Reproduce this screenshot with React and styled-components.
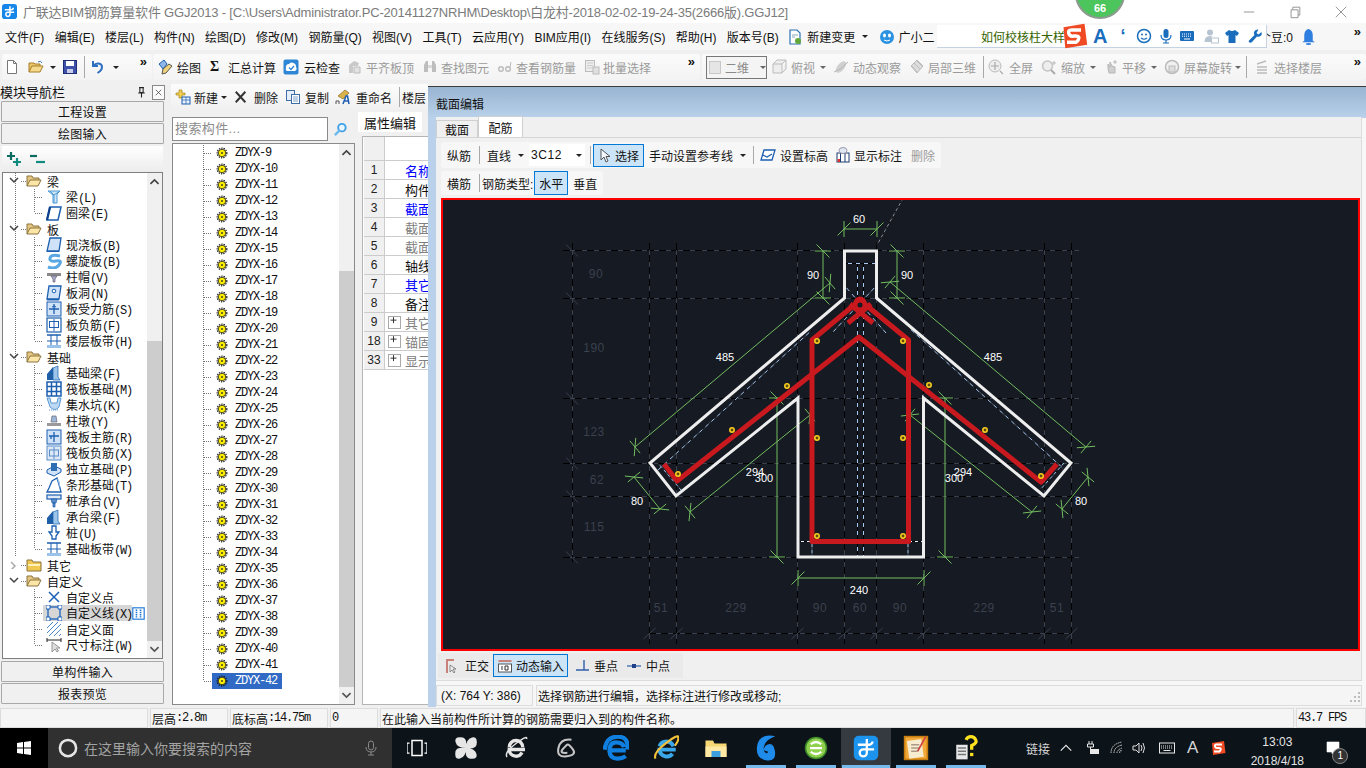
import React from 'react'
import styled, { createGlobalStyle } from 'styled-components'

const Global = createGlobalStyle`
  html, body { margin: 0; padding: 0; width: 1366px; height: 768px; overflow: hidden; background: #f0f0f0; }
  body { font-family: "Liberation Sans", "Noto Sans CJK SC", sans-serif; font-size: 12px; color: #111; }
  * { box-sizing: border-box; }
  svg { display: block; flex: none; }
`

const Page = styled.div`
  position: relative;
  width: 1366px;
  height: 768px;
  display: flex;
  flex-direction: column;
  overflow: hidden;
`

/* ---------- title bar ---------- */
const TitleBar = styled.div`
  height: 23px;
  background: #fff;
  display: flex;
  align-items: center;
  padding-left: 2px;
  color: #7b7b7b;
  font-size: 13px;
  white-space: nowrap;
`
const TitleText = styled.span`
  margin-left: 6px;
  letter-spacing: -0.2px;
`
const WinButtons = styled.div`
  margin-left: auto;
  display: flex;
  align-items: center;
  gap: 32px;
  padding-right: 18px;
`
const Badge = styled.div`
  position: absolute;
  left: 1075px;
  top: -31px;
  width: 50px;
  height: 50px;
  border-radius: 50%;
  background: #4cc65c;
  border: 2px solid #8d9a8f;
  color: #fff;
  font-size: 11px;
  font-weight: bold;
  display: flex;
  align-items: flex-end;
  justify-content: center;
  padding-bottom: 3px;
`

/* ---------- menu bar ---------- */
const MenuBar = styled.div`
  height: 27px;
  background: #f7f7f7;
  display: flex;
  align-items: center;
`
const MenuItems = styled.div`
  width: 937px;
  flex: none;
  display: flex;
  align-items: center;
  gap: 10.35px;
  padding-left: 5px;
  white-space: nowrap;
`
const MenuItem = styled.span`
  display: inline-flex;
  align-items: center;
  gap: ${p => p.$gap ?? 3}px;
  margin-left: ${p => p.$ml || 0}px;
`
const NewsPanel = styled.div`
  position: relative;
  z-index: 1;
  flex: none;
  width: 330px;
  height: 23px;
  background: #fff;
  border: 1px solid #c4d2e2;
  border-width: 0 1px 1px 0;
  display: flex;
  align-items: center;
  padding-left: 44px;
  color: #356300;
  font-size: 12px;
  white-space: nowrap;
`
const SogouGlyph = styled.span`
  margin-left: ${p => p.$ml || 0}px;
  color: #1a6dbd;
  font-size: ${p => p.$fs || 18}px;
  font-weight: bold;
`
const Beans = styled.span`
  margin-left: -8px;
  white-space: nowrap;
`
const More = styled.span`
  flex: none;
  font-size: 13px;
  font-weight: bold;
  line-height: 10px;
  color: #111;
  margin-left: auto;
  margin-right: 5px;
  transform: translateY(-5px);
`

/* ---------- tool bar ---------- */
const ToolRow = styled.div`
  height: 34px;
  background: #f0f0f0;
  display: flex;
  padding-top: 4px;
  gap: 2px;
`
const ToolSeg = styled.div`
  height: 26px;
  width: ${p => p.$w}px;
  margin-left: ${p => p.$ml || 0}px;
  background: linear-gradient(#fbfbfb, #f3f3f3);
  border-radius: 3px;
  display: flex;
  align-items: center;
  white-space: nowrap;
`
const Tool = styled.span`
  display: inline-flex;
  align-items: center;
  flex: none;
  gap: ${p => p.$gap ?? 3}px;
  margin-left: ${p => p.$ml || 0}px;
  color: ${p => (p.$off ? '#9b9b9b' : '#151515')};
  white-space: nowrap;
`
const Sep = styled.span`
  flex: none;
  width: 1px;
  height: ${p => p.$h || 22}px;
  margin-left: ${p => p.$ml || 0}px;
  background: #a8a8a8;
`
const Caret = styled.span`
  flex: none;
  width: 0;
  height: 0;
  margin-left: ${p => p.$ml || 0}px;
  border-left: 3px solid transparent;
  border-right: 3px solid transparent;
  border-top: 3px solid ${p => p.$c || '#222'};
`
const ViewCombo = styled.div`
  width: 61px;
  height: 23px;
  margin-left: 4px;
  border: 1px solid #777;
  background: #f4f4f4;
  display: flex;
  align-items: center;
  padding-left: 2px;
  gap: 4px;
  color: #8a8a8a;
  flex: none;
`
const Swatch = styled.span`
  width: 13px;
  height: 13px;
  background: #e5e5e5;
  border: 1px solid #c8c8c8;
`
const SigmaMark = styled.span`
  font-family: "Liberation Serif", serif;
  font-size: 14px;
  font-weight: bold;
  width: 10px;
`

/* ---------- main ---------- */
const Main = styled.div`
  height: 623px;
  display: flex;
`
const Nav = styled.div`
  width: 165px;
  display: flex;
  flex-direction: column;
`
const NavHead = styled.div`
  height: 17px;
  font-size: 13px;
  display: flex;
  align-items: center;
  white-space: nowrap;
  line-height: 16px;
`
const NavClose = styled.span`
  width: 16px;
  height: 15px;
  border: 1px solid #888;
  background: #fafafa;
  margin-left: 4px;
  display: flex;
  align-items: center;
  justify-content: center;
`
const NavButton = styled.div`
  height: 21px;
  margin: 0 1px 1px;
  border: 1px solid #a9a9a9;
  border-radius: 1px;
  background: #f0f0f0;
  display: flex;
  align-items: center;
  justify-content: center;
  letter-spacing: 0.2px;
`
const NavTools = styled.div`
  height: 26px;
  margin: 1px 2px 0;
  background: linear-gradient(#fff, #ececec);
  display: flex;
  align-items: center;
  padding-left: 4px;
  gap: 6px;
`
const TreeBox = styled.div`
  height: 487px;
  margin: 0 2px 2px;
  border: 1px solid #7f7f7f;
  background: #fff;
  display: flex;
  overflow: hidden;
`
const TreeRows = styled.div`
  width: 143px;
  overflow: hidden;
`
const dotsV = 'repeating-linear-gradient(#777 0 1px, transparent 1px 2px)'
const TreeRow = styled.div`
  height: 16px;
  display: flex;
  align-items: center;
  white-space: nowrap;
  background-image: ${p => (p.$trunk ? dotsV : 'none')}, ${p => (p.$branch ? dotsV : 'none')};
  background-size: 1px 100%, 1px ${p => (p.$last ? '50%' : '100%')};
  background-position: 12px 0, 31px 0;
  background-repeat: no-repeat;
  padding-left: ${p => p.$left}px;
`
const Dots = styled.span`
  flex: none;
  width: ${p => p.$w}px;
  height: 1px;
  margin-left: ${p => p.$ml || 0}px;
  background: repeating-linear-gradient(to right, #777 0 1px, transparent 1px 2px);
`
const Chevron = styled.span`
  flex: none;
  width: 10px;
  height: 8px;
  display: flex;
  justify-content: center;
`
const GroupName = styled.span`
  margin-left: 5px;
`
const LeafName = styled.span`
  display: inline-flex;
  align-items: center;
  gap: 4px;
  height: 16px;
  padding-left: 3px;
  width: ${p => (p.$on ? '89px' : 'auto')};
  background: ${p => (p.$on ? '#d6d6d6' : 'transparent')};
`
const Mono = styled.span`
  font-family: "Liberation Mono", monospace;
  font-size: 12px;
  letter-spacing: -1.2px;
`
const Scroll = styled.div`
  flex: none;
  width: ${p => p.$w || 15}px;
  margin-left: auto;
  display: flex;
  flex-direction: column;
  background: #f0f0f0;
`
const ScrollEnd = styled.div`
  height: ${p => p.$h || 17}px;
  display: flex;
  align-items: center;
  justify-content: center;
  flex: none;
`
const ScrollGap = styled.div`
  height: ${p => p.$h}px;
  flex: none;
`
const ScrollThumb = styled.div`
  flex: 1;
  background: #cdcdcd;
`

/* ---------- component list and properties ---------- */
const Center = styled.div`
  width: 263px;
  margin-left: 0;
  display: flex;
  flex-direction: column;
`
const CenterTools = styled.div`
  height: 26px;
  margin-left: 6px;
  background: linear-gradient(#fcfcfc, #f0f0f0);
  display: flex;
  align-items: center;
  white-space: nowrap;
  overflow: hidden;
`
const CenterBody = styled.div`
  flex: 1;
  display: flex;
`
const ListCol = styled.div`
  width: 183px;
  margin-left: 7px;
  padding-top: 7px;
  display: flex;
  flex-direction: column;
`
const SearchRow = styled.div`
  display: flex;
  align-items: center;
  height: 24px;
`
const SearchBox = styled.div`
  width: 156px;
  height: 24px;
  border: 1px solid #8a8a8a;
  background: #fff;
  color: #8c8c8c;
  font-size: 13px;
  padding-left: 2px;
  line-height: 22px;
  letter-spacing: 0.4px;
`
const SearchGlass = styled.span`
  margin-left: 5px;
`
const ListBox = styled.div`
  flex: 1;
  margin: 2px 0 2px;
  border: 1px solid #8a8a8a;
  background: #fff;
  display: flex;
  overflow: hidden;
`
const ListRows = styled.div`
  flex: 1;
  padding-top: 1px;
`
const ListRow = styled.div`
  height: 16px;
  display: flex;
  align-items: center;
  padding-left: 31px;
  background-image: ${dotsV};
  background-size: 1px ${p => (p.$last ? '50%' : '100%')};
  background-position: 30px 0;
  background-repeat: no-repeat;
`
const ListEntry = styled.span`
  display: inline-flex;
  align-items: center;
  gap: 7px;
  height: 16px;
  padding: 0 5px 0 4px;
  background: ${p => (p.$on ? '#316ac5' : 'transparent')};
  color: ${p => (p.$on ? '#fff' : '#111')};
`
const Props = styled.div`
  flex: 1;
  min-width: 0;
  margin-left: 3px;
  padding-top: 2px;
  display: flex;
  flex-direction: column;
  overflow: hidden;
`
const PropTab = styled.div`
  width: 64px;
  height: 20px;
  background: #fff;
  font-size: 13px;
  display: flex;
  align-items: center;
  justify-content: center;
  white-space: nowrap;
`
const PropTable = styled.div`
  flex: 1;
  margin: 4px 0 2px 4px;
  width: 110px;
  border: 1px solid #b4b4b4;
  background: #fff;
  padding-left: 1px;
`
const PropHead = styled.div`
  height: 24px;
  display: flex;
  border-bottom: 1px solid #ccc;
`
const PropRow = styled.div`
  height: 19px;
  display: flex;
  border-bottom: 1px solid #ccc;
  font-size: 13px;
  white-space: nowrap;
  color: ${p => p.$c};
`
const PropIndex = styled.div`
  width: 21px;
  flex: none;
  background: #f0f0f0;
  border-right: 1px solid #ccc;
  color: #222;
  font-size: 12px;
  display: flex;
  align-items: center;
  justify-content: center;
`
const PropName = styled.div`
  padding-left: ${p => (p.$plus ? 3 : 20)}px;
  display: flex;
  align-items: center;
  gap: 4px;
`
const PlusBox = styled.span`
  width: 13px;
  height: 13px;
  border: 1px solid #aaa;
  display: flex;
  align-items: center;
  justify-content: center;
`

/* ---------- section dialog ---------- */
const Dialog = styled.div`
  flex: 1;
  margin-top: 2px;
  border-top: 1px solid #3c3c3c;
  background: linear-gradient(#99b4d1, #b9d1ea) top / 100% 31px no-repeat,
    linear-gradient(to right, #b9d1ea 8px, #f7f7f7 8px);
  display: flex;
  flex-direction: column;
  padding: 0 4px 1px 8px;
`
const DialogTitle = styled.div`
  height: 30px;
  padding-top: 10px;
  font-size: 12px;
  line-height: 16px;
  color: #111;
`
const DialogBody = styled.div`
  flex: 1;
  background: #f0f0f0;
  border-right: 1px solid #dcdcdc;
  border-bottom: 1px solid #dcdcdc;
  display: flex;
  flex-direction: column;
`
const Tabs = styled.div`
  height: 21px;
  display: flex;
  align-items: flex-end;
  border-bottom: 1px solid #d5d5d5;
`
const Tab = styled.div`
  width: ${p => p.$w}px;
  height: ${p => (p.$on ? 21 : 17)}px;
  background: ${p => (p.$on ? '#fff' : '#f0f0f0')};
  border: 1px solid #d0d0d0;
  border-bottom: 0;
  display: flex;
  align-items: center;
  justify-content: center;
`
const RebarBar = styled.div`
  width: ${p => p.$w}px;
  height: ${p => p.$h}px;
  margin: ${p => p.$top}px 0 0 5px;
  background: #f7f7f7;
  border-radius: 3px;
  display: flex;
  align-items: center;
  white-space: nowrap;
`
const RebarCombo = styled.div`
  width: 56px;
  height: 22px;
  margin-left: 5px;
  background: #fff;
  display: flex;
  align-items: center;
  padding-left: 2px;
  font-size: 12px;
  letter-spacing: 0.6px;
  flex: none;
`
const Toggle = styled.span`
  display: inline-flex;
  align-items: center;
  justify-content: ${p => (p.$center ? 'center' : 'flex-start')};
  gap: ${p => p.$gap ?? 3}px;
  flex: none;
  width: ${p => p.$w}px;
  height: ${p => p.$h || 23}px;
  margin-left: ${p => p.$ml || 0}px;
  padding-left: ${p => (p.$center ? 0 : 3)}px;
  background: #cce4f7;
  border: 1px solid #0078d7;
`
const Canvas = styled.div`
  height: 453px;
  margin: 3px 0 0 5px;
  width: 919px;
  border: 2px solid #f00;
  background: #151a23;
  overflow: hidden;
`
const BottomBar = styled.div`
  height: 25px;
  width: 245px;
  margin: 2px 0 0 2px;
  background: #eaeaea;
  display: flex;
  align-items: center;
  white-space: nowrap;
`
const DialogStatus = styled.div`
  height: 21px;
  margin-top: 4px;
  flex: none;
  display: flex;
  gap: 3px;
`
const StatusCell = styled.div`
  flex: ${p => (p.$grow ? 1 : 'none')};
  width: ${p => p.$w || 'auto'}px;
  background: #f5f5f5;
  border: 1px solid #dcdcdc;
  display: flex;
  align-items: center;
  padding-left: ${p => p.$pad ?? 2}px;
  white-space: nowrap;
  overflow: hidden;
`
const Grip = styled.span`
  margin-left: auto;
  align-self: flex-end;
`

/* ---------- status + taskbar ---------- */
const Status = styled.div`
  height: 21px;
  background: #f0f0f0;
  display: flex;
  gap: 2px;
  padding-top: 1px;
`
const Task = styled.div`
  height: 40px;
  background: #0c1319;
  display: flex;
  color: #fff;
`
const Start = styled.div`
  width: 48px;
  background: #000;
  display: flex;
  align-items: center;
  justify-content: center;
`
const TaskSearch = styled.div`
  width: 344px;
  background: #303030;
  display: flex;
  align-items: center;
  padding: 0 13px 0 10px;
  color: #a3a3a3;
  font-size: 14px;
  white-space: nowrap;
`
const SearchHint = styled.span`
  margin-left: 6px;
  flex: 1;
`
const TaskView = styled.div`
  width: 49px;
  display: flex;
  align-items: center;
  justify-content: center;
`
const TaskApp = styled.div`
  width: 50px;
  display: flex;
  align-items: center;
  justify-content: center;
  background: ${p =>
    p.$on
      ? 'linear-gradient(#76b9ed,#76b9ed) center bottom / 48px 3px no-repeat, #343a3f'
      : p.$open
      ? 'linear-gradient(#76b9ed,#76b9ed) center bottom / 40px 3px no-repeat'
      : 'none'};
`
const Tray = styled.div`
  margin-left: 35px;
  display: flex;
  align-items: center;
  color: #d6d6d6;
`
const TrayItem = styled.span`
  margin-left: ${p => p.$ml || 0}px;
  display: inline-flex;
  font-size: ${p => p.$fs || 12}px;
`
const Clock = styled.div`
  margin-left: 21px;
  width: 60px;
  display: flex;
  flex-direction: column;
  align-items: center;
  font-size: 12px;
  line-height: 19px;
  color: #e4e4e4;
  padding-top: 7px;
`
const Notice = styled.div`
  position: relative;
  margin-left: 18px;
  display: flex;
`
const NoticeCount = styled.span`
  position: absolute;
  right: -7px;
  bottom: -8px;
  width: 16px;
  height: 16px;
  border-radius: 50%;
  background: #333;
  border: 1px solid #888;
  color: #fff;
  font-size: 10px;
  line-height: 14px;
  text-align: center;
`

/* ---------- icons ---------- */
const Ic = ({ s = 16, children }) => (
  <svg width={s} height={s} viewBox="0 0 16 16" fill="none">{children}</svg>
)
const B = '#1c5fb0'
const L = '#cfe2f7'

const icons = {
  logo: <><rect width="16" height="16" rx="3" fill="#1787e8" /><path d="M8.5 2.5v8.5a2.2 2.2 0 1 1-2.2-2.2H13M3 6h7a2 2 0 0 0 2-2" stroke="#fff" strokeWidth="1.6" /></>,
  doc: <><path d="M3.5 1.5h6l3 3v10h-9z" fill="#fff" stroke="#777" /><path d="M9.5 1.5v3h3" stroke="#777" /></>,
  open: <><path d="M1 13V4h5l1 1h5v2" fill="#e9c569" stroke="#a87f2a" /><path d="M1 13l3-6h11l-3 6z" fill="#f5d98a" stroke="#a87f2a" /><path d="M10 3q3-2 4 1" stroke="#3a7ac0" /></>,
  save: <><rect x="1.5" y="1.5" width="13" height="13" fill="#3f51a8" stroke="#1f2d75" /><rect x="4" y="2" width="8" height="5" fill="#fff" /><rect x="5" y="10" width="6" height="4" fill="#c9cfe8" /></>,
  undo: <path d="M3 2v5h5M3.5 7C6 3 12 4 12 8c0 2.500-2 4.500-4.500 6" stroke="#2f6fc0" strokeWidth="2" />,
  draw: <><path d="M2 5l5-4 3 4-4 5z" fill="#8fb6e6" stroke={B} /><path d="M6 10l6-5 3 2-6 7-4 1z" fill="#f0d27a" stroke="#555" /></>,
  cloud: <><rect x=".5" y=".5" width="15" height="15" rx="2" fill="#2e86d6" /><path d="M3 9a3 3 0 0 1 3-4 4 4 0 0 1 7 3 2.500 2.500 0 0 1-1 4H5a2 2 0 0 1-2-3z" fill="#fff" /><path d="M6 8.500l2 2 3-3.500" stroke="#2e86d6" strokeWidth="1.300" /></>,
  plate: <><path d="M3 14V6l5-4 5 2-1 3H7v7z" fill="#c9c9c9" /><path d="M8 8h6v6H8z" fill="#e2e2e2" stroke="#bbb" /></>,
  binoc: <><path d="M2 13V6l2-4h2v11zM10 13V2h2l2 4v7z" fill="#bdbdbd" /><rect x="6" y="6" width="4" height="3" fill="#d8d8d8" /></>,
  glass: <><circle cx="4" cy="10" r="2.300" stroke="#bbb" strokeWidth="1.400" /><circle cx="11" cy="10" r="2.300" stroke="#bbb" strokeWidth="1.400" /><path d="M13 8l1-5" stroke="#bbb" /></>,
  batch: <><rect x="1.500" y="1.500" width="9" height="11" fill="#eee" stroke="#bbb" /><path d="M3 4h6M3 6.500h6M3 9h6" stroke="#ccc" /><rect x="9" y="8" width="6" height="7" fill="#e0e0e0" stroke="#bbb" /></>,
  cube: <><path d="M2 5h9v9H2zM2 5l4-4h9l-4 4M11 14l4-4V1" fill="#eee" stroke="#bcbcbc" /></>,
  orbit: <><ellipse cx="8" cy="8" rx="3.500" ry="7" transform="rotate(40 8 8)" fill="#d0d0d0" /><path d="M1 13q7-2 14-10" stroke="#b5b5b5" /></>,
  part: <><path d="M8 1l6 6-6 7-6-7z" fill="#ddd" stroke="#bbb" /><path d="M5 4l6 6M8 2l5 5M3 7l5 6" stroke="#bbb" /></>,
  full: <><circle cx="7" cy="7" r="6" fill="#eee" stroke="#bbb" /><path d="M7 3v8M3 7h8M12 12l3 3" stroke="#aaa" strokeWidth="1.200" /></>,
  zoomq: <><circle cx="6.500" cy="7" r="5" fill="#eee" stroke="#c4c4c4" strokeWidth="1.500" /><path d="M10 11l4 4" stroke="#aaa" strokeWidth="2" /><path d="M13 2v4M11 4h4" stroke="#bbb" /></>,
  pan: <><path d="M4 9V5l2 3V3l2 4 3 1v6H5z" fill="#cfcfcf" stroke="#b5b5b5" /><path d="M11 1v4M9 3h4" stroke="#bbb" /></>,
  rotate: <><circle cx="8" cy="8" r="6.500" stroke="#bbb" strokeWidth="1.500" fill="#f1f1f1" /><rect x="5" y="7" width="6" height="6" fill="#ddd" stroke="#bbb" /></>,
  floor: <><path d="M3 5l9-3M3 8h10M3 11h10M3 14h10" stroke="#bcbcbc" strokeWidth="1.500" /></>,
  newb: <><path d="M4 1h3v3h3v2H7v3H4V6H1V4h3z" fill="#f2d04f" stroke="#a8841a" strokeWidth=".7" /><rect x="7" y="8" width="8" height="7" fill="#eaf1fb" stroke={B} /><path d="M7 11h8M11 8v7" stroke={B} strokeWidth=".7" /></>,
  cross: <path d="M2 2l11 12M13 2L2 14" stroke="#333" strokeWidth="2.200" />,
  copy: <><rect x="1.500" y="1.500" width="8" height="10" fill="#e7effa" stroke="#3f6fa8" /><rect x="6.500" y="5.500" width="8" height="9" fill="#fff" stroke="#3f6fa8" /><path d="M8 8h5M8 10h5M8 12h5" stroke="#7fa3cf" /></>,
  rename: <><path d="M3 7l7-6 4 3-6 6z" fill="#d9b24c" stroke="#8b6c20" strokeWidth=".7" /><path d="M8 15l3-8h1.500l1.500 8M9.500 12h4" stroke="#1f5fb0" strokeWidth="1.500" /><path d="M1 15v-3h3v3" stroke="#555" /></>,
  pin: <path d="M5 2h6M6 2v6h4V2M4 8.500h8M8 9v5" stroke="#222" strokeWidth="1.300" />,
  smallx: <path d="M4 4l8 8M12 4l-8 8" stroke="#333" />,
  glassBlue: <><circle cx="9.500" cy="6" r="4" stroke="#3ea0e6" strokeWidth="2" fill="#eaf6ff" /><path d="M7 9l-5 5" stroke="#6bb9ee" strokeWidth="2.500" /></>,
  gear: <><circle cx="8" cy="8" r="5" fill="#ffee00" stroke="#111" strokeWidth="1" /><circle cx="8" cy="8" r="6.500" stroke="#111" strokeWidth="1.500" strokeDasharray="1.800 1.400" /><circle cx="8" cy="8" r="1.200" fill="#333" /></>,
  folderOpen: <><path d="M1 13V3h5l1 2h6v3" fill="#e7c77f" stroke="#8a7440" /><path d="M1 13l3-6h11l-3 6z" fill="#fbe6a8" stroke="#8a7440" /></>,
  folderShut: <><path d="M1 14V3h5l1 2h8v9z" fill="#f1c84f" stroke="#8a7440" /><path d="M2 7h12v2H2z" fill="#fff1b8" /></>,
  arrow: <path d="M4 2v11l3-3 2 5 2-1-2-4.500h4z" fill="#f4f8fc" stroke="#555" />,
  setHeight: <><path d="M4 3h11l-3 10H1z" fill="#fff" stroke={B} strokeWidth="1.300" /><path d="M3 8l4 2 5-3" stroke={B} strokeWidth="1.300" /></>,
  showDim: <><rect x="2" y="6" width="12" height="9" fill="#fff" stroke="#1c3c70" /><path d="M5.500 6v9M10 6v9" stroke="#1c3c70" /><rect x="2.500" y="12" width="2.500" height="3" fill="#d33" /><ellipse cx="8" cy="3.500" rx="4" ry="3" fill="#dfe7f2" stroke="#99a" /></>,
  ortho: <><path d="M2 2h8M3 2v13" stroke="#c9827a" strokeWidth="2" /><path d="M6 7v7l2-2 2 3 1-1-2-3h3z" fill="#eee" stroke="#666" strokeWidth=".7" /></>,
  dyn: <><rect x="1.500" y="2" width="13" height="2" fill="#c9827a" /><rect x="1.500" y="6" width="13" height="8" fill="#fff" stroke="#555" /><path d="M5 8v4M8 8h3v4H8z" stroke="#333" /></>,
  perp: <path d="M1 12h13M9 2v10" stroke="#2f5fa8" strokeWidth="1.400" />,
  mid: <><path d="M1 8h14" stroke="#2f5fa8" strokeWidth="1.200" /><rect x="6" y="6" width="4" height="4" fill="#1f3f88" /></>,
  plus: <path d="M6 1.500v8M2 5.500h8" stroke="#222" strokeWidth="1.200" />,
  grip: <path d="M13 3h2v2h-2zM9 7h2v2H9zM13 7h2v2h-2zM5 11h2v2H5zM9 11h2v2H9zM13 11h2v2h-2z" fill="#bdbdbd" />,
  doc2: <><path d="M3 1h7l3 3v11H3z" fill="#fff" stroke="#2c71b8" strokeWidth="1.200" /><path d="M5 6h6M5 8h3" stroke="#8ab" /><circle cx="11" cy="12" r="3" fill="#63a93a" /></>,
  mascot: <><circle cx="8" cy="8" r="7" fill="#2b93e2" /><ellipse cx="5.500" cy="6.500" rx="1.500" ry="2" fill="#fff" /><ellipse cx="10.500" cy="6.500" rx="1.500" ry="2" fill="#fff" /><path d="M5 11q3 2 6 0" stroke="#fff" /></>,
  bell: <><path d="M8 1q4 1 4 6v5l2 1.500H2L4 12V7q0-5 4-6z" fill="#2f7fe0" /><ellipse cx="8" cy="15" rx="2.500" ry="1" fill="#2f7fe0" /></>,
  sogou: <><path d="M2 3l12-2 1.500 12-12.500 2z" fill="#ef4a23" /><path d="M12 4.500H6.500q-2 0-1.500 2t3 1.500h1q2.500 0 1.500 2t-2 1.500H4" stroke="#fff" strokeWidth="2" /></>,
  smile: <><circle cx="8" cy="8" r="6.500" stroke="#1a6dbd" strokeWidth="1.500" /><circle cx="6" cy="6.500" r="1" fill="#1a6dbd" /><circle cx="10" cy="6.500" r="1" fill="#1a6dbd" /><path d="M5 10q3 2.500 6 0" stroke="#1a6dbd" strokeWidth="1.200" /></>,
  mic: <><rect x="5.500" y="1" width="5" height="9" rx="2.500" fill="#1a6dbd" /><path d="M3 7q0 5 5 5t5-5M8 12v3M5 15h6" stroke="#1a6dbd" strokeWidth="1.200" /></>,
  kbd: <><rect x="1" y="3" width="14" height="10" rx="1" fill="#1a6dbd" /><path d="M3 6h10M3 8.200h10" stroke="#fff" strokeDasharray="1 1" /><path d="M5 11h6" stroke="#fff" /></>,
  user: <><circle cx="7" cy="4.500" r="3" fill="#b6c3d1" /><path d="M1.500 14q0-6 5.500-6 2 0 3 1H8v5z" fill="#b6c3d1" /><rect x="8.500" y="10" width="7" height="5" fill="none" stroke="#b6c3d1" /></>,
  shirt: <path d="M5 2L1 5l2 3 1.500-1v8h7V7L13 8l2-3-4-3q-3 2-6 0z" fill="#1a6dbd" />,
  wrench: <path d="M14.500 4l-3 2.500L9.500 5 11.500 1.500Q8 1 7 4q-.5 2 .5 3L2 12.500q-1 1.500.5 2t2.500-.5L10 8.500q3 1 4.500-1.500.5-1.500 0-3z" fill="#1a6dbd" />,
  dash: <path d="M2 8h12" stroke="#8a8a8a" />,
  restore: <><path d="M3.500 5.500h8v9h-8z" stroke="#8a8a8a" /><path d="M5.500 5.500v-3h8v9h-2" stroke="#8a8a8a" /></>,
  close: <path d="M2 2l12 12M14 2L2 14" stroke="#8a8a8a" />,
  plusPair: <><path d="M5 1v8M1 5h8" stroke="#0d6b62" strokeWidth="2.200" /><path d="M11 7v8M7 11h8" stroke="#118a80" strokeWidth="2.200" /></>,
  minusPair: <><path d="M0 5h7" stroke="#0d6b62" strokeWidth="2.200" /><path d="M6 11h9" stroke="#118a80" strokeWidth="2.200" /></>,
  chevDown: <path d="M1 1l4 4 4-4" stroke="#444" strokeWidth="1.500" />,
  chevRight: <path d="M2 1l4 4-4 4" stroke="#aaa" strokeWidth="1.500" />,
  up: <path d="M3 11l5-5 5 5" stroke="#444" strokeWidth="2" />,
  down: <path d="M3 5l5 5 5-5" stroke="#555" strokeWidth="2" />,
  columns: <><rect x="1" y="1" width="14" height="14" fill="#fff" stroke="#1a78d8" strokeWidth="1.400" /><path d="M5.500 3v10M10.500 3v10" stroke="#1a78d8" strokeWidth="2" strokeDasharray="2 .8" /></>,

  // tree
  beam: <><path d="M2 2h12l-3 3v9H7V6z" fill="#cfe6f7" stroke="#4f9bd6" /><path d="M8 6v8M4 2l4 4 6-4" stroke="#4f9bd6" /></>,
  ring: <><path d="M4 2h11l-3 13H1z" fill="#fff" stroke={B} strokeWidth="1.500" /><path d="M1 15l3-13" stroke="#0d3f8c" strokeWidth="2.200" /></>,
  slab: <><path d="M4 1h11l-2 13H1z" fill={L} stroke={B} strokeWidth="1.300" /><path d="M1 14h12v1H1z" fill={B} /></>,
  spiral: <path d="M14 3Q5 1 4 5t6 3 3 4-11 2" stroke="#58a8e4" strokeWidth="3" />,
  cap: <><rect x="1" y="4" width="14" height="3" fill="#888" /><path d="M5 7h6l-2 3v3H7v-3z" fill="#aac" stroke="#667" strokeWidth=".7" /></>,
  hole: <><path d="M3 1h12l-2 13H1z" fill={L} stroke={B} strokeWidth="1.300" /><circle cx="8" cy="6" r="1.800" fill="#fff" stroke={B} /><path d="M1 14h12v1.500H1z" fill={B} /></>,
  rebarS: <><rect x="1" y="1" width="14" height="14" fill={L} stroke={B} /><path d="M8 3v10M3 8h10" stroke={B} strokeWidth="1.300" /><path d="M6 6q2-2 4 0" stroke={B} /></>,
  rebarF: <><rect x="1" y="1" width="14" height="14" fill="#fff" stroke={B} strokeWidth="1.200" /><rect x="3.500" y="4.500" width="9" height="6" fill="none" stroke={B} /><path d="M8 2v12" stroke={B} /></>,
  band: <><path d="M1 2h14M1 14h14" stroke={B} strokeWidth="1.500" /><path d="M5 2v12M11 2v12M1 8h14" stroke={B} /><rect x="1" y="12" width="14" height="3" fill="#9bc3ea" /></>,
  fbeam: <><path d="M1 15V9l6-7v13z" fill="#1e5fa8" /><path d="M7 15V3l5-2v11l2 3z" fill="#9cc5ea" stroke={B} strokeWidth=".7" /></>,
  raft: <><rect x="1" y="1" width="14" height="14" fill="#fff" stroke={B} strokeWidth="1.500" /><path d="M1 5.500h14M1 10.500h14M5.500 1v14M10.500 1v14" stroke={B} strokeWidth="1.500" /></>,
  pit: <><path d="M1 1h3l1 5h6l1-5h3l-2 9q-4 5-9 0z" fill="#bcd8f2" stroke="#5a9ad6" /><path d="M3 13h10" stroke="#5a9ad6" strokeDasharray="1 1" /></>,
  pier: <><path d="M6 3h4l1 6H5z" fill="#9db7d8" stroke="#667" strokeWidth=".7" /><rect x="1" y="10" width="14" height="3" fill="#9a9a9a" /></>,
  raftM: <><rect x="1" y="1" width="14" height="14" fill={L} stroke={B} /><path d="M8 3v10M3 7h10M5 7v3" stroke={B} strokeWidth="1.300" /></>,
  raftN: <><rect x="1" y="1" width="14" height="14" fill="#dde9f7" stroke="#5a8cc8" /><rect x="3.500" y="5" width="9" height="6" fill="none" stroke="#5a8cc8" /><path d="M8 2v12" stroke="#5a8cc8" /></>,
  iso: <><path d="M1 9l7-4 7 3v3l-7 4-7-3z" fill="#cfe2f7" stroke={B} /><path d="M5 2h6v8H5z" fill="#2d6db4" /></>,
  stripF: <><path d="M1 15l2-4 3-7 5-3 3 10 1 4z" fill="#fff" stroke={B} strokeWidth="1.300" /><path d="M11 1l3 10V5z" fill="#9cc5ea" /></>,
  pilecap: <><rect x="1" y="2" width="14" height="4" fill="#dfe9f5" stroke={B} strokeWidth="1.200" /><path d="M5 6h6l-1 4H6zM7 10h2v4H7z" fill="#5c8cc4" stroke={B} strokeWidth=".7" /></>,
  pile: <><path d="M6 1h4v6h3l-3 4v3H6v-3L3 7h3z" fill="#fff" stroke={B} strokeWidth="1.300" /></>,
  point: <path d="M3 3l10 10M13 3L3 13" stroke="#1a60b8" strokeWidth="1.500" />,
  line: <><rect x="2" y="2" width="12" height="12" fill="none" stroke="#1a60b8" strokeWidth="1.300" /><path d="M0 0h4v4H0zM12 0h4v4h-4zM0 12h4v4H0zM12 12h4v4h-4z" fill="#fff" stroke="#1a60b8" /></>,
  face: <path d="M1 7l6-6M1 12L12 1M3 15L15 3M8 15l7-7M13 15l2-2" stroke="#4f86c8" />,
  dim: <><path d="M1 1v4M15 1v4M1 3h14" stroke="#222" /><path d="M6 5v10l3-3 2 3 1.500-1-2-3H14z" fill="#ddd" stroke="#999" /></>,

  // taskbar
  win: <path d="M1 3l6-1v5.500H1zM8 2l7-1v6.500H8zM1 8.500h6V14l-6-1zM8 8.500h7V15l-7-1z" fill="#fff" />,
  cortana: <circle cx="8" cy="8" r="6.500" stroke="#e6e6e6" strokeWidth="2" />,
  micGray: <><rect x="5.500" y="1" width="5" height="9" rx="2.500" stroke="#8a8a8a" /><path d="M3 7q0 5 5 5t5-5M8 12v3M5 15h6" stroke="#8a8a8a" /></>,
  taskView: <><rect x="4" y="2" width="8" height="12" stroke="#fff" strokeWidth="1.200" /><path d="M2 4H0v8h2M14 4h2v8h-2" stroke="#fff" /></>,
  fan: <path d="M8 8Q2 8 1 4t5-3q3 1 2 7zm0 0q0-6 4-7t3 5q-1 3-7 2zm0 0q6 0 7 4t-5 3q-3-1-2-7zm0 0q0 6-4 7T1 10q1-3 7-2z" fill="#e6e6e6" />,
  ieGray: <><path d="M14 9H3.500a4.500 4.500 0 0 0 8.500 2M3.500 7.500a4.500 4.500 0 0 1 9 0" stroke="#e6e6e6" strokeWidth="2.200" /><path d="M2 14Q0 11 8 5t7-3" stroke="#e6e6e6" /></>,
  swirl: <path d="M12 2Q4 1 2.500 8t6 6T13 9 9 5.500 5.500 9 9 11.500" stroke="#c6c6c6" strokeWidth="1.500" />,
  edge: <path d="M14 9.500H4q0-5 4-5t5 3M4 9.500q0 5 5 5 3 0 5-1.500M1 9Q2 1 9 1t6 8" stroke="#0f7fe0" strokeWidth="2.600" />,
  ie: <><path d="M14 9H4a4.500 4.500 0 0 0 8 2.500M4 7a4.500 4.500 0 0 1 8.500 0" stroke="#39a7e8" strokeWidth="2.400" /><path d="M1.500 14.500Q0 11 8 5t7.500-3.500q.5 2-2 5" stroke="#f3c23a" strokeWidth="1.300" /></>,
  explorer: <><path d="M1 3h5l1 2h8v9H1z" fill="#f7d774" /><rect x="1" y="7" width="14" height="7" fill="#ffe9a3" /><rect x="5" y="10" width="6" height="4" fill="#3ca0e0" /></>,
  gBlue: <path d="M12 1Q4 0 3 7t5 8 5-5-5-3l-1 2 3 1q-1 3-3 1T7 5q1-2 5-4z" fill="#1f8bea" stroke="#1f8bea" />,
  greenE: <><circle cx="8" cy="8" r="7" fill="#8fd14f" stroke="#3c8a2a" /><path d="M4 8h8M4.500 5.500q3.500-3 7 0M4.500 10.500q3.500 3 7 0" stroke="#fff" strokeWidth="1.500" /></>,
  appBlue: <><rect x=".5" y=".5" width="15" height="15" rx="3" fill="#1c94ee" /><path d="M8.500 2.500v8.500a2.200 2.200 0 1 1-2.200-2.200H13M3 6h7a2 2 0 0 0 2-2" stroke="#fff" strokeWidth="1.400" /></>,
  note: <><rect x="1" y="1" width="14" height="14" fill="#f3a83a" stroke="#c97f10" /><rect x="3" y="3" width="9" height="11" fill="#f7ecd0" transform="rotate(-8 8 8)" /><path d="M5 6h5M5 8h5M5 10h4" stroke="#a98" /><path d="M14 1l-5 9" stroke="#c44" /></>,
  help: <><rect x="2" y="6" width="7" height="9" fill="#e8e8e8" /><path d="M3 8h5M3 10h5M3 12h5" stroke="#777" /><path d="M8 3q1-2 3-2t3 2-2.500 3.500V9" stroke="#ffe21f" strokeWidth="2" /><rect x="10.500" y="11" width="2" height="2" fill="#ffe21f" /></>,
  plug: <><path d="M5 1v3M8 1v3M3.500 4h6v3h-6z" stroke="#e8e8e8" /><path d="M6.500 7v3" stroke="#e8e8e8" /><rect x="6" y="9" width="9" height="5" fill="#e8e8e8" /></>,
  wifi: <path d="M2 13q0-9 11-11M5 13q0-6 8-8M8 13q0-3 5-5M11 13a1 1 0 0 1 2-2" stroke="#c8c8c8" strokeDasharray="1.500 .6" />,
  speaker: <path d="M2 6h3l3-3v10l-3-3H2zM10 5q2 3 0 6M12 3q3 5 0 10" stroke="#e0e0e0" />,
  kbdTray: <><rect x=".5" y="3" width="15" height="10" stroke="#e8e8e8" /><path d="M2 6h12M2 8h12" stroke="#e8e8e8" strokeDasharray="1 1" /><path d="M4.500 10.500h7" stroke="#e8e8e8" /></>,
  chevUp: <path d="M2 11l6-6 6 6" stroke="#e8e8e8" strokeWidth="1.300" />,
  chat: <path d="M2 2h12v10H9l-2 2v-2H2zM4 5h8M4 7.500h8M4 10h5" stroke="#fff" fill="#fff" strokeWidth=".6" />
}
const Icon = ({ n, s }) => <Ic s={s}>{icons[n]}</Ic>

/* ---------- section drawing ---------- */
const GRID = '#3b414d'
const GREEN = '#74bd5f'
const FrameLine = ({ a, b, c = GRID, dash = '7 5', w = 1 }) => (
  <>
    <line x1={a[0]} y1={a[1]} x2={b[0]} y2={b[1]} stroke={c} strokeWidth={w} />
    <line x1={a[0]} y1={a[1]} x2={b[0]} y2={b[1]} stroke="#000" strokeWidth={w} strokeDasharray={dash} />
  </>
)
const Dim = ({ a, b }) => {
  const len = Math.hypot(b[0] - a[0], b[1] - a[1])
  const ux = (b[0] - a[0]) / len
  const uy = (b[1] - a[1]) / len
  const tick = (p, key) => (
    <g key={key}>
      <line x1={p[0] - uy * 8} y1={p[1] + ux * 8} x2={p[0] + uy * 8} y2={p[1] - ux * 8} />
      <line x1={p[0] - (ux + uy) * 6.500} y1={p[1] + (ux - uy) * 6.500} x2={p[0] + (ux + uy) * 6.500} y2={p[1] - (ux - uy) * 6.500} />
    </g>
  )
  return (
    <g stroke={GREEN} strokeWidth="1">
      <line x1={a[0]} y1={a[1]} x2={b[0]} y2={b[1]} />
      {tick(a, 'a')}
      {tick(b, 'b')}
    </g>
  )
}
const Label = styled.text`
  font-family: "Liberation Sans", sans-serif;
  font-size: ${p => p.$fs || 11}px;
  fill: ${p => p.$c || '#fff'};
  letter-spacing: ${p => p.$sp || 0}px;
  text-anchor: middle;
`
const gridX = [649.5, 676.5, 797.5, 844.5, 876.5, 923.5, 1044.5, 1071.5]
const gridY = [250.5, 298.5, 398.5, 463.5, 496.5, 557.5]
const dimTexts = [
  ['60', 859, 223], ['90', 813, 279], ['90', 907, 279], ['485', 725, 361], ['485', 993, 361],
  ['294', 755, 476], ['300', 764, 482], ['294', 963, 476], ['300', 954, 482], ['80', 637, 505], ['80', 1081, 505], ['240', 859, 594]
]
const gridTexts = [
  ['90', 596, 278], ['190', 594, 352], ['123', 594, 436], ['62', 597, 484], ['115', 594, 531],
  ['51', 661, 612], ['229', 736, 612], ['90', 820, 612], ['60', 860, 612], ['90', 900, 612], ['229', 984, 612], ['51', 1057, 612]
]
const bars = [
  [817, 341], [903, 341], [787, 386], [929, 385], [732, 430], [985, 430], [678, 474], [1041, 476],
  [817, 438], [903, 438], [817, 536], [903, 536]
]
const dims = [
  [[844, 229], [877, 229]], [[823, 251], [823, 298]], [[897, 251], [897, 298]],
  [[635, 447], [830, 283]], [[890, 282], [1086, 447]], [[634, 477], [660, 509]], [[1062, 509], [1088, 477]],
  [[690, 512], [810, 415]], [[910, 415], [1032, 512]], [[777, 398], [777, 557]], [[945, 398], [945, 557]],
  [[798, 578], [924, 578]]
]

const SectionDrawing = () => (
  <svg width="915" height="449" viewBox="443 200 915 449">
    {gridY.map(y => <FrameLine key={y} a={[563, y]} b={[1079, y]} />)}
    {gridX.map(x => <FrameLine key={x} a={[x, 243]} b={[x, 644]} />)}
    <FrameLine a={[572.5, 243]} b={[572.5, 562]} />
    <FrameLine a={[649, 633.5]} b={[1072, 633.5]} />
    <g stroke={GRID}>
      {gridY.map(y => <line key={y} x1="566" y1={y - 6} x2="578" y2={y + 6} />)}
      {gridX.map(x => <line key={x} x1={x - 6} y1="639" x2={x + 6} y2="628" />)}
    </g>
    {gridTexts.map(([t, x, y], i) => <Label key={i} x={x} y={y} $fs={12} $sp={0.5} $c="#3b414d">{t}</Label>)}
    <FrameLine a={[877, 245]} b={[902, 200]} c="#8a8f98" dash="3 3" />

    <FrameLine a={[857.5, 263]} b={[857.5, 557]} c="#a8c8f0" dash="4 4" />
    <FrameLine a={[863.500, 263]} b={[863.500, 557]} c="#a8c8f0" dash="4 4" />
    <FrameLine a={[844, 263.500]} b={[877, 263.500]} c="#a8c8f0" dash="4 4" />
    <FrameLine a={[812, 330]} b={[658, 470]} c="#a8c8f0" dash="4 4" />
    <FrameLine a={[908, 327]} b={[1065, 470]} c="#a8c8f0" dash="4 4" />
    <FrameLine a={[844, 285]} b={[886, 333]} c="#a8c8f0" dash="4 4" />
    <FrameLine a={[877, 285]} b={[832, 333]} c="#a8c8f0" dash="4 4" />
    <FrameLine a={[658, 463]} b={[681, 490]} c="#a8c8f0" dash="3 3" />
    <FrameLine a={[1040, 490]} b={[1064, 463]} c="#a8c8f0" dash="3 3" />
    <FrameLine a={[798, 541.500]} b={[924, 541.500]} c="#e6eef8" dash="3 3" />
    <FrameLine a={[812, 541]} b={[812, 557]} c="#a8c8f0" dash="3 3" />
    <FrameLine a={[908, 541]} b={[908, 557]} c="#a8c8f0" dash="3 3" />

    {dims.map(([a, b], i) => <Dim key={i} a={a} b={b} />)}

    <polygon
      points="844.500,251 876.500,251 876.500,298 1071,463 1044,496 923.500,398 923.500,557 798,557 798,398 676,496 650,463 844.500,298"
      fill="none"
      stroke="#eeeeee"
      strokeWidth="3"
    />

    <g fill="none" stroke="#c8191f" strokeWidth="5" strokeLinejoin="round">
      <path d="M664 464 L677 481 L859 337 L1041 482 L1057 464" />
      <path d="M859 301 L812 340 V541.500 H908.500 V340 L861 301" />
      <path d="M848 323 L871 304 M873 323 L850 304" />
    </g>
    <circle cx="860" cy="303" r="6.500" fill="#c8191f" />
    <circle cx="860" cy="305" r="2.500" fill="#151a23" />

    {bars.map(([x, y]) => (
      <circle key={`${x}-${y}`} cx={x} cy={y} r="2.200" fill="#5a4a10" stroke="#ffd21f" strokeWidth="1.500" />
    ))}
    {dimTexts.map(([t, x, y], i) => <Label key={i} x={x} y={y}>{t}</Label>)}
  </svg>
)

/* ---------- data ---------- */
const treeData = [
  { g: '梁', kids: [['梁(L)', 'beam'], ['圈梁(E)', 'ring']] },
  { g: '板', kids: [['现浇板(B)', 'slab'], ['螺旋板(B)', 'spiral'], ['柱帽(V)', 'cap'], ['板洞(N)', 'hole'], ['板受力筋(S)', 'rebarS'], ['板负筋(F)', 'rebarF'], ['楼层板带(H)', 'band']] },
  { g: '基础', kids: [['基础梁(F)', 'fbeam'], ['筏板基础(M)', 'raft'], ['集水坑(K)', 'pit'], ['柱墩(Y)', 'pier'], ['筏板主筋(R)', 'raftM'], ['筏板负筋(X)', 'raftN'], ['独立基础(P)', 'iso'], ['条形基础(T)', 'stripF'], ['桩承台(V)', 'pilecap'], ['承台梁(F)', 'fbeam'], ['桩(U)', 'pile'], ['基础板带(W)', 'band']] },
  { g: '其它', shut: true, kids: [] },
  { g: '自定义', end: true, kids: [['自定义点', 'point'], ['自定义线(X)', 'line', true], ['自定义面', 'face'], ['尺寸标注(W)', 'dim']] }
]
const menus = ['文件(F)', '编辑(E)', '楼层(L)', '构件(N)', '绘图(D)', '修改(M)', '钢筋量(Q)', '视图(V)', '工具(T)', '云应用(Y)', 'BIM应用(I)', '在线服务(S)', '帮助(H)', '版本号(B)']
const propRows = [
  ['1', '名称', '#0000ff'], ['2', '构件', '#111'], ['3', '截面', '#0000ff'], ['4', '截面', '#808080'], ['5', '截面', '#808080'],
  ['6', '轴线', '#111'], ['7', '其它', '#0000ff'], ['8', '备注', '#111'], ['9', '其它', '#808080', 1], ['18', '锚固', '#808080', 1], ['33', '显示', '#808080', 1]
]
const listNames = Array.from({ length: 34 }, (_, i) => `ZDYX-${i + 9}`)

const Mixed = ({ text }) =>
  text.split(/([\x20-\x7e]+)/).map((s, i) =>
    /^[\x20-\x7e]+$/.test(s) ? <Mono key={i}>{s}</Mono> : <span key={i}>{s}</span>
  )

const NavTree = () => (
  <TreeRows>
    {treeData.map(group => (
      <React.Fragment key={group.g}>
        <TreeRow $left={6} $trunk={!group.shut && !group.end}>
          <Chevron><svg width="10" height="8" viewBox="0 0 10 8" fill="none">{group.shut ? icons.chevRight : icons.chevDown}</svg></Chevron>
          <Dots $w={5} $ml={2} />
          <Icon n={group.shut ? 'folderShut' : 'folderOpen'} />
          <GroupName>{group.g}</GroupName>
        </TreeRow>
        {group.kids.map(([name, icon, on], i) => (
          <TreeRow key={name} $left={0} $trunk={!group.end} $branch $last={i === group.kids.length - 1}>
            <Dots $w={8} $ml={32} />
            <LeafName $on={on}>
              <Icon n={icon} />
              <span><Mixed text={name} /></span>
            </LeafName>
            {on && <Icon n="columns" s={13} />}
          </TreeRow>
        ))}
      </React.Fragment>
    ))}
  </TreeRows>
)

export default function App() {
  return (
    <Page>
      <Global />
      <TitleBar>
        <Icon n="logo" s={15} />
        <TitleText>广联达BIM钢筋算量软件 GGJ2013 - [C:\Users\Administrator.PC-20141127NRHM\Desktop\白龙村-2018-02-02-19-24-35(2666版).GGJ12]</TitleText>
        <WinButtons>
          <Icon n="dash" s={14} />
          <Icon n="restore" s={14} />
          <Icon n="close" s={14} />
        </WinButtons>
      </TitleBar>
      <Badge>66</Badge>

      <MenuBar>
        <MenuItems>
          {menus.map(m => <MenuItem key={m}>{m}</MenuItem>)}
          <MenuItem $gap={4} $ml={-2}><Icon n="doc2" />新建变更<Caret $ml={3} /></MenuItem>
          <MenuItem $gap={4}><Icon n="mascot" />广小二</MenuItem>
        </MenuItems>
        <NewsPanel>
          如何校核柱大样
          <Tool $ml={-5}><Icon n="sogou" s={28} /></Tool>
          <SogouGlyph $ml={5} $fs={20}>A</SogouGlyph>
          <SogouGlyph $ml={13}>‘</SogouGlyph>
          <Tool $ml={11}><Icon n="smile" /></Tool>
          <Tool $ml={6}><Icon n="mic" /></Tool>
          <Tool $ml={5}><Icon n="kbd" /></Tool>
          <Tool $ml={8}><Icon n="user" /></Tool>
          <Tool $ml={5}><Icon n="shirt" /></Tool>
          <Tool $ml={7}><Icon n="wrench" /></Tool>
        </NewsPanel>
        <Beans>个豆:0</Beans>
        <Tool $ml={7}><Icon n="bell" s={17} /></Tool>
        <More>»</More>
      </MenuBar>

      <ToolRow>
        <ToolSeg $w={150} $ml={2}>
          <Tool $ml={2}><Icon n="doc" /></Tool>
          <Tool $ml={8}><Icon n="open" /></Tool>
          <Caret $ml={6} />
          <Tool $ml={6}><Icon n="save" /></Tool>
          <Sep $ml={6} />
          <Tool $ml={5}><Icon n="undo" /></Tool>
          <Caret $ml={7} />
          <More>»</More>
        </ToolSeg>
        <ToolSeg $w={547} $ml={-1}>
          <Tool $ml={4} $gap={4}><Icon n="draw" />绘图</Tool>
          <Tool $ml={9} $gap={8}><SigmaMark>Σ</SigmaMark>汇总计算</Tool>
          <Tool $ml={7} $gap={5}><Icon n="cloud" />云检查</Tool>
          <Tool $ml={6} $gap={4} $off><Icon n="plate" />平齐板顶</Tool>
          <Tool $ml={8} $off><Icon n="binoc" />查找图元</Tool>
          <Tool $ml={8} $off><Icon n="glass" />查看钢筋量</Tool>
          <Tool $ml={8} $off><Icon n="batch" />批量选择</Tool>
          <More>»</More>
        </ToolSeg>
        <ToolSeg $w={664} $ml={0}>
          <ViewCombo><Swatch />二维<Caret $ml={7} $c="#666" /></ViewCombo>
          <Tool $ml={4} $gap={4} $off><Icon n="cube" />俯视</Tool>
          <Caret $ml={5} $c="#666" />
          <Tool $ml={7} $gap={4} $off><Icon n="orbit" />动态观察</Tool>
          <Tool $ml={8} $off><Icon n="part" />局部三维</Tool>
          <Sep $ml={7} />
          <Tool $ml={4} $gap={5} $off><Icon n="full" />全屏</Tool>
          <Tool $ml={8} $gap={4} $off><Icon n="zoomq" />缩放</Tool>
          <Caret $ml={5} $c="#666" />
          <Tool $ml={8} $gap={2} $off><Icon n="pan" />平移</Tool>
          <Caret $ml={5} $c="#666" />
          <Tool $ml={7} $gap={4} $off><Icon n="rotate" />屏幕旋转</Tool>
          <Caret $ml={3} $c="#666" />
          <Sep $ml={5} />
          <Tool $ml={7} $gap={4} $off><Icon n="floor" />选择楼层</Tool>
          <More>»</More>
        </ToolSeg>
      </ToolRow>

      <Main>
        <Nav>
          <NavHead>
            模块导航栏
            <Tool $ml={70}><Icon n="pin" s={13} /></Tool>
            <NavClose><Icon n="smallx" s={11} /></NavClose>
          </NavHead>
          <NavButton>工程设置</NavButton>
          <NavButton>绘图输入</NavButton>
          <NavTools>
            <Icon n="plusPair" />
            <Tool $ml={2}><Icon n="minusPair" /></Tool>
          </NavTools>
          <TreeBox>
            <NavTree />
            <Scroll>
              <ScrollEnd><Icon n="up" s={13} /></ScrollEnd>
              <ScrollGap $h={151} />
              <ScrollThumb />
              <ScrollEnd><Icon n="down" s={13} /></ScrollEnd>
            </Scroll>
          </TreeBox>
          <NavButton>单构件输入</NavButton>
          <NavButton>报表预览</NavButton>
        </Nav>

        <Center>
          <CenterTools>
            <Tool $ml={4} $gap={3}><Icon n="newb" />新建</Tool>
            <Caret $ml={3} />
            <Tool $ml={7} $gap={6}><Icon n="cross" s={14} />删除</Tool>
            <Tool $ml={7} $gap={4}><Icon n="copy" />复制</Tool>
            <Tool $ml={6} $gap={5}><Icon n="rename" />重命名</Tool>
            <Sep $ml={7} $h={20} />
            <Tool $ml={2}>楼层</Tool>
          </CenterTools>
          <CenterBody>
            <ListCol>
              <SearchRow>
                <SearchBox>搜索构件...</SearchBox>
                <SearchGlass><Icon n="glassBlue" s={15} /></SearchGlass>
              </SearchRow>
              <ListBox>
                <ListRows>
                  {listNames.map((name, i) => (
                    <ListRow key={name} $last={i === listNames.length - 1}>
                      <Dots $w={8} />
                      <ListEntry $on={i === listNames.length - 1}>
                        <Icon n="gear" s={12} />
                        <Mono>{name}</Mono>
                      </ListEntry>
                    </ListRow>
                  ))}
                </ListRows>
                <Scroll>
                  <ScrollEnd><Icon n="up" s={13} /></ScrollEnd>
                  <ScrollGap $h={110} />
                  <ScrollThumb />
                  <ScrollEnd><Icon n="down" s={13} /></ScrollEnd>
                </Scroll>
              </ListBox>
            </ListCol>
            <Props>
              <PropTab>属性编辑</PropTab>
              <PropTable>
                <PropHead><PropIndex /></PropHead>
                {propRows.map(([n, t, c, plus]) => (
                  <PropRow key={n} $c={c}>
                    <PropIndex>{n}</PropIndex>
                    <PropName $plus={plus}>
                      {plus && <PlusBox><Icon n="plus" s={12} /></PlusBox>}
                      {t}
                    </PropName>
                  </PropRow>
                ))}
              </PropTable>
            </Props>
          </CenterBody>
        </Center>

        <Dialog>
          <DialogTitle>截面编辑</DialogTitle>
          <DialogBody>
            <Tabs>
              <Tab $w={42}>截面</Tab>
              <Tab $w={45} $on>配筋</Tab>
            </Tabs>
            <RebarBar $w={500} $h={26} $top={4}>
              <Tool $ml={6}>纵筋</Tool>
              <Sep $ml={8} $h={18} />
              <Tool $ml={7}>直线</Tool>
              <Caret $ml={7} />
              <RebarCombo>3C12<Caret $ml={14} /></RebarCombo>
              <Sep $ml={5} $h={18} />
              <Toggle $w={51} $ml={2} $gap={2}><Icon n="arrow" />选择</Toggle>
              <Tool $ml={5}>手动设置参考线</Tool>
              <Caret $ml={7} />
              <Sep $ml={7} $h={18} />
              <Tool $ml={6} $gap={4}><Icon n="setHeight" />设置标高</Tool>
              <Tool $ml={7} $gap={3}><Icon n="showDim" />显示标注</Tool>
              <Tool $ml={9} $off>删除</Tool>
            </RebarBar>
            <RebarBar $w={162} $h={24} $top={3}>
              <Tool $ml={6}>横筋</Tool>
              <Sep $ml={8} $h={18} />
              <Tool $ml={2}>钢筋类型:</Tool>
              <Toggle $w={34} $h={24} $ml={1} $center>水平</Toggle>
              <Tool $ml={5}>垂直</Tool>
            </RebarBar>
            <Canvas><SectionDrawing /></Canvas>
            <BottomBar>
              <Tool $ml={6} $gap={5}><Icon n="ortho" />正交</Tool>
              <Toggle $w={75} $ml={4} $gap={3}><Icon n="dyn" />动态输入</Toggle>
              <Tool $ml={7} $gap={3}><Icon n="perp" />垂点</Tool>
              <Tool $ml={8} $gap={4}><Icon n="mid" />中点</Tool>
            </BottomBar>
          </DialogBody>
          <DialogStatus>
            <StatusCell $w={97} $pad={4}>(X: 764 Y: 386)</StatusCell>
            <StatusCell $grow $pad={1}>
              选择钢筋进行编辑，选择标注进行修改或移动;
              <Grip><Icon n="grip" /></Grip>
            </StatusCell>
          </DialogStatus>
        </Dialog>
      </Main>

      <Status>
        <StatusCell $w={148} />
        <StatusCell $w={78} $pad={1}><Mixed text="层高:2.8m" /></StatusCell>
        <StatusCell $w={98} $pad={1}><Mixed text="底标高:14.75m" /></StatusCell>
        <StatusCell $w={48} $pad={1}><Mono>0</Mono></StatusCell>
        <StatusCell $grow $pad={1}>在此输入当前构件所计算的钢筋需要归入到的构件名称。</StatusCell>
        <StatusCell $w={70} $pad={1}><Mono>43.7 FPS</Mono></StatusCell>
      </Status>

      <Task>
        <Start><Icon n="win" /></Start>
        <TaskSearch>
          <Icon n="cortana" s={20} />
          <SearchHint>在这里输入你要搜索的内容</SearchHint>
          <Icon n="micGray" />
        </TaskSearch>
        <TaskView><Icon n="taskView" s={20} /></TaskView>
        <TaskApp><Icon n="fan" s={24} /></TaskApp>
        <TaskApp><Icon n="ieGray" s={24} /></TaskApp>
        <TaskApp><Icon n="swirl" s={22} /></TaskApp>
        <TaskApp><Icon n="edge" s={26} /></TaskApp>
        <TaskApp><Icon n="ie" s={26} /></TaskApp>
        <TaskApp><Icon n="explorer" s={24} /></TaskApp>
        <TaskApp $open><Icon n="gBlue" s={26} /></TaskApp>
        <TaskApp $open><Icon n="greenE" s={24} /></TaskApp>
        <TaskApp $on><Icon n="appBlue" s={26} /></TaskApp>
        <TaskApp $open><Icon n="note" s={26} /></TaskApp>
        <TaskApp $open><Icon n="help" s={26} /></TaskApp>
        <Tray>
          <TrayItem>链接</TrayItem>
          <TrayItem $ml={9}><Icon n="chevUp" s={14} /></TrayItem>
          <TrayItem $ml={11}><Icon n="plug" /></TrayItem>
          <TrayItem $ml={9}><Icon n="wifi" /></TrayItem>
          <TrayItem $ml={6}><Icon n="speaker" /></TrayItem>
          <TrayItem $ml={12}><Icon n="kbdTray" /></TrayItem>
          <TrayItem $ml={12} $fs={17}>A</TrayItem>
          <TrayItem $ml={12}><Icon n="sogou" /></TrayItem>
          <Clock><span>13:03</span><span>2018/4/18</span></Clock>
          <Notice><Icon n="chat" /><NoticeCount>1</NoticeCount></Notice>
        </Tray>
      </Task>
    </Page>
  )
}
